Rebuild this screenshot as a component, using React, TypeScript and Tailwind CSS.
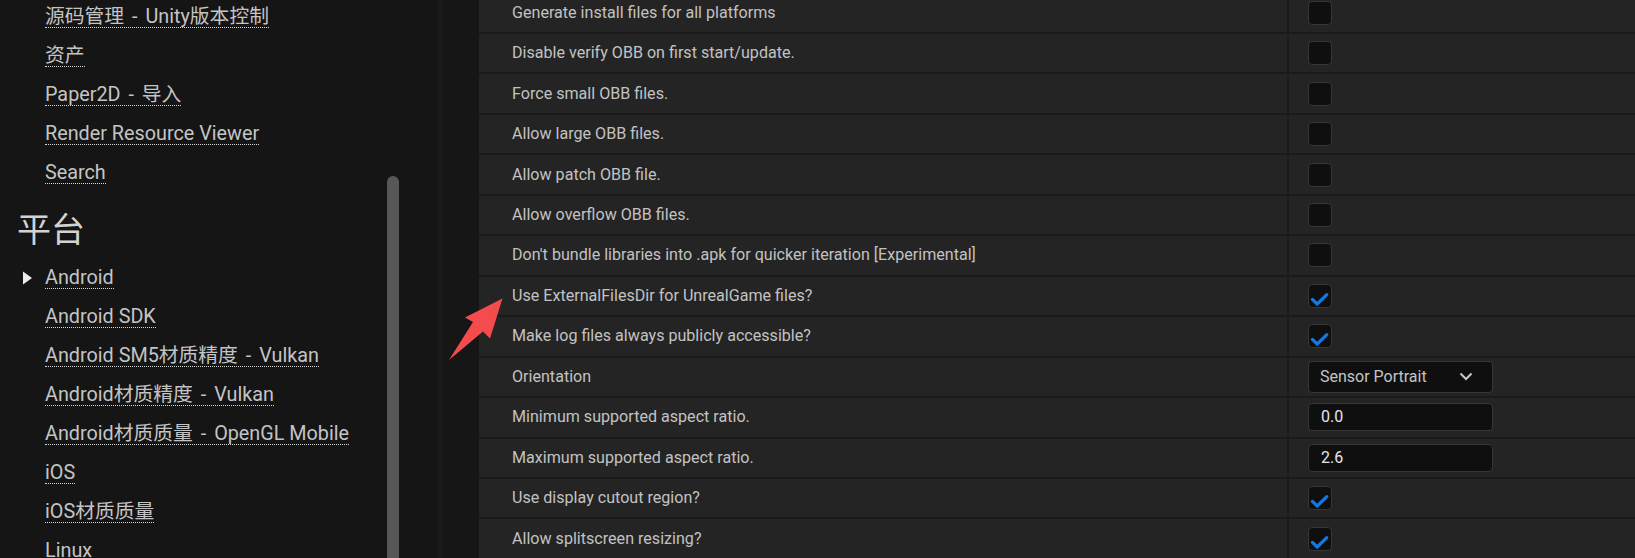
import React from "react";

const font = { fontFamily: 'Roboto, "Noto Sans CJK SC", sans-serif' };

type Val =
  | { kind: "check"; on: boolean }
  | { kind: "select"; text: string }
  | { kind: "input"; text: string };

const rows: { label: string; v: Val }[] = [
  { label: "Generate install files for all platforms", v: { kind: "check", on: false } },
  { label: "Disable verify OBB on first start/update.", v: { kind: "check", on: false } },
  { label: "Force small OBB files.", v: { kind: "check", on: false } },
  { label: "Allow large OBB files.", v: { kind: "check", on: false } },
  { label: "Allow patch OBB file.", v: { kind: "check", on: false } },
  { label: "Allow overflow OBB files.", v: { kind: "check", on: false } },
  { label: "Don't bundle libraries into .apk for quicker iteration [Experimental]", v: { kind: "check", on: false } },
  { label: "Use ExternalFilesDir for UnrealGame files?", v: { kind: "check", on: true } },
  { label: "Make log files always publicly accessible?", v: { kind: "check", on: true } },
  { label: "Orientation", v: { kind: "select", text: "Sensor Portrait" } },
  { label: "Minimum supported aspect ratio.", v: { kind: "input", text: "0.0" } },
  { label: "Maximum supported aspect ratio.", v: { kind: "input", text: "2.6" } },
  { label: "Use display cutout region?", v: { kind: "check", on: true } },
  { label: "Allow splitscreen resizing?", v: { kind: "check", on: true } },
];

const navTop = ["源码管理 - Unity版本控制", "资产", "Paper2D - 导入", "Render Resource Viewer", "Search"];
const navBottom = [
  "Android",
  "Android SDK",
  "Android SM5材质精度 - Vulkan",
  "Android材质精度 - Vulkan",
  "Android材质质量 - OpenGL Mobile",
  "iOS",
  "iOS材质质量",
  "Linux",
];

function NavText({ text }: { text: string }) {
  const parts = text.split(" - ");
  return (
    <>
      {parts.map((p, i) => (
        <React.Fragment key={i}>
          {i > 0 && <span className="px-[3px]"> - </span>}
          {p}
        </React.Fragment>
      ))}
    </>
  );
}

function NavItem({ text, arrow }: { text: string; arrow?: boolean }) {
  return (
    <div className="h-[39px] flex items-center pl-[22px] shrink-0">
      <div className="w-[23px] flex items-center">
        {arrow && (
          <svg width="10" height="14" viewBox="0 0 10 14">
            <polygon points="1,0.5 10,7 1,13.5" fill="#ececec" />
          </svg>
        )}
      </div>
      <span className="text-[19.8px] leading-[21px] text-[#c4c4c4] border-b border-dotted border-[#d8d8d8] whitespace-nowrap">
        <NavText text={text} />
      </span>
    </div>
  );
}

function Check({ on }: { on: boolean }) {
  return (
    <div className="w-[24px] h-[24px] rounded-[4px] bg-[#0f0f0f] border border-[#363636] flex items-center justify-center">
      {on && (
        <svg width="24" height="24" viewBox="0 0 24 24" className="shrink-0">
          <polyline
            points="4.4,15.4 9.2,20 18.8,10.6"
            fill="none"
            stroke="#1279e4"
            strokeWidth="3.2"
            strokeLinecap="round"
            strokeLinejoin="round"
          />
        </svg>
      )}
    </div>
  );
}

function Value({ v }: { v: Val }) {
  if (v.kind === "check") return <Check on={v.on} />;
  if (v.kind === "select")
    return (
      <div className="w-[185px] h-[32px] rounded-[4px] bg-[#0f0f0f] border border-[#363636] flex items-center justify-between pl-[11px] pr-[19px]">
        <span className="text-[16px] text-[#c4c4c4]">{v.text}</span>
        <svg width="14" height="9" viewBox="0 0 14 9">
          <polyline points="1.5,1.5 7,7 12.5,1.5" fill="none" stroke="#c8c8c8" strokeWidth="2" />
        </svg>
      </div>
    );
  return (
    <div className="w-[185px] h-[28px] rounded-[4px] bg-[#0f0f0f] border border-[#363636] flex items-center pl-[12px]">
      <span className="text-[16px] text-[#e6e6e6]">{v.text}</span>
    </div>
  );
}

export default function App() {
  return (
    <div className="w-[1635px] h-[558px] flex overflow-hidden bg-[#151515]" style={font}>
      <div className="w-[438px] h-full relative shrink-0 flex flex-col">
        <div className="flex flex-col mt-[-2.5px]">
          {navTop.map((t) => (
            <NavItem key={t} text={t} />
          ))}
          <div className="h-[66px] pt-[9px] flex items-center pl-[17px] shrink-0">
            <span className="text-[34px] leading-[40px] text-[#d2d2d2]">平台</span>
          </div>
          {navBottom.map((t, i) => (
            <NavItem key={t} text={t} arrow={i === 0} />
          ))}
        </div>
        <div className="absolute left-[387px] top-[176px] w-[12px] h-[420px] rounded-full bg-[#575757]" />
      </div>
      <div className="w-[5px] h-full bg-[#1a1a1a] shrink-0" />
      <div className="w-[36px] h-full bg-[#161616] shrink-0" />
      <div className="flex-1 flex flex-col mt-[-6.46px] relative">
        {rows.map((r, i) => (
          <div key={i} className="h-[40.46px] shrink-0 flex bg-[#242424] border-b-2 border-[#1a1a1a]">
            <div className="w-[810px] shrink-0 flex items-center pl-[33px] border-r-2 border-[#1a1a1a]">
              <span className="text-[16.1px] text-[#c2c2c2] whitespace-nowrap">{r.label}</span>
            </div>
            <div className="flex-1 flex items-center pl-[19px]">
              <Value v={r.v} />
            </div>
          </div>
        ))}
        <svg
          className="absolute left-[-34px] top-[300px]"
          width="60"
          height="70"
          viewBox="0 0 60 70"
        >
          <polygon
            points="57.5,4.5 45,44.5 38,37.5 4,66 28,28 20,23.5"
            fill="#f44c4c"
          />
        </svg>
      </div>
    </div>
  );
}
